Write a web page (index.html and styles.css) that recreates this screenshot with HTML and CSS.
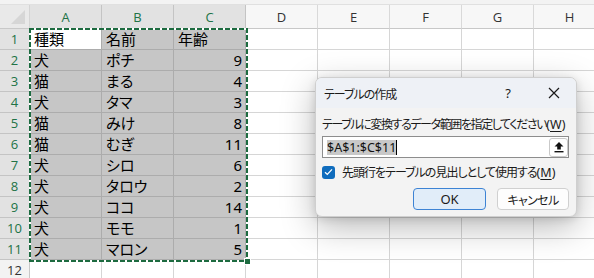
FILE: index.html
```html
<!DOCTYPE html>
<html lang="ja">
<head>
<meta charset="utf-8">
<title>テーブルの作成</title>
<link rel="stylesheet" href="styles.css">
</head>
<body>
<div class="app">
  <div class="topband"></div>
  <div class="sheet">
    <div class="corner"><span class="tri"></span></div>
    <div class="colhead sel">A</div>
    <div class="colhead sel">B</div>
    <div class="colhead sel">C</div>
    <div class="colhead">D</div>
    <div class="colhead">E</div>
    <div class="colhead">F</div>
    <div class="colhead">G</div>
    <div class="colhead">H</div>

    <div class="rowhead sel">1</div><div class="cell active">種類</div><div class="cell hl">名前</div><div class="cell hl">年齢</div><div class="cell"></div><div class="cell"></div><div class="cell"></div><div class="cell"></div><div class="cell"></div>
    <div class="rowhead sel">2</div><div class="cell hl">犬</div><div class="cell hl">ポチ</div><div class="cell hl num">9</div><div class="cell"></div><div class="cell"></div><div class="cell"></div><div class="cell"></div><div class="cell"></div>
    <div class="rowhead sel">3</div><div class="cell hl">猫</div><div class="cell hl">まる</div><div class="cell hl num">4</div><div class="cell"></div><div class="cell"></div><div class="cell"></div><div class="cell"></div><div class="cell"></div>
    <div class="rowhead sel">4</div><div class="cell hl">犬</div><div class="cell hl">タマ</div><div class="cell hl num">3</div><div class="cell"></div><div class="cell"></div><div class="cell"></div><div class="cell"></div><div class="cell"></div>
    <div class="rowhead sel">5</div><div class="cell hl">猫</div><div class="cell hl">みけ</div><div class="cell hl num">8</div><div class="cell"></div><div class="cell"></div><div class="cell"></div><div class="cell"></div><div class="cell"></div>
    <div class="rowhead sel">6</div><div class="cell hl">猫</div><div class="cell hl">むぎ</div><div class="cell hl num">11</div><div class="cell"></div><div class="cell"></div><div class="cell"></div><div class="cell"></div><div class="cell"></div>
    <div class="rowhead sel">7</div><div class="cell hl">犬</div><div class="cell hl">シロ</div><div class="cell hl num">6</div><div class="cell"></div><div class="cell"></div><div class="cell"></div><div class="cell"></div><div class="cell"></div>
    <div class="rowhead sel">8</div><div class="cell hl">犬</div><div class="cell hl">タロウ</div><div class="cell hl num">2</div><div class="cell"></div><div class="cell"></div><div class="cell"></div><div class="cell"></div><div class="cell"></div>
    <div class="rowhead sel">9</div><div class="cell hl">犬</div><div class="cell hl">ココ</div><div class="cell hl num">14</div><div class="cell"></div><div class="cell"></div><div class="cell"></div><div class="cell"></div><div class="cell"></div>
    <div class="rowhead sel">10</div><div class="cell hl">犬</div><div class="cell hl">モモ</div><div class="cell hl num">1</div><div class="cell"></div><div class="cell"></div><div class="cell"></div><div class="cell"></div><div class="cell"></div>
    <div class="rowhead sel">11</div><div class="cell hl">犬</div><div class="cell hl">マロン</div><div class="cell hl num">5</div><div class="cell"></div><div class="cell"></div><div class="cell"></div><div class="cell"></div><div class="cell"></div>
    <div class="rowhead">12</div><div class="cell"></div><div class="cell"></div><div class="cell"></div><div class="cell"></div><div class="cell"></div><div class="cell"></div><div class="cell"></div><div class="cell"></div>

    <div class="ants"><span class="handle"></span></div>
  </div>

  <div class="dialog">
    <div class="titlebar">
      <span class="title">テーブルの作成</span>
      <span class="help">?</span>
      <svg class="close" width="12" height="12" viewBox="0 0 12 12"><path d="M1 1L11 11M11 1L1 11" stroke="#1a1a1a" stroke-width="1.2" fill="none"/></svg>
    </div>
    <div class="dbody">
      <div class="label">テーブルに変換するデータ範囲を指定してください<span class="acc">(<u>W</u>)</span></div>
      <div class="rangebox">
        <span class="range">$A$1:$C$11</span><span class="caret"></span>
        <span class="pick">
          <svg width="12" height="12" viewBox="0 0 12 12"><path d="M6 1L1.5 5.5H4.2V8.5H7.8V5.5H10.5Z" fill="#111"/><rect x="1.5" y="10" width="9" height="1.4" fill="#111"/></svg>
        </span>
      </div>
      <div class="check">
        <span class="box"><svg width="9" height="8" viewBox="0 0 9 8"><path d="M1 4.2L3.3 6.4L8 1.4" stroke="#fff" stroke-width="1.3" fill="none"/></svg></span>
        <span class="cklabel">先頭行をテーブルの見出しとして使用する<span class="acc">(<u>M</u>)</span></span>
      </div>
      <div class="buttons">
        <span class="btn ok">OK</span>
        <span class="btn">キャンセル</span>
      </div>
    </div>
  </div>
</div>
</body>
</html>
```

FILE: styles.css
```css
body {margin: 0; background: #fff; font-family: "Noto Sans CJK JP", "Noto Sans", sans-serif;}
.app {position: relative; width: 594px; height: 278px; overflow: hidden; background: #fff;}
.topband {height: 5px; background: #f3f3f3; border-bottom: 1px solid #e0e0e0; box-sizing: border-box;}

.sheet {position: relative; display: grid; grid-template-columns: 30px repeat(8, 72px); grid-template-rows: 24px repeat(12, 21px);}
.corner {background: #e9e9e9; border-right: 1px solid #d4d4d4; border-bottom: 1px solid #c8c8c8; position: relative;}
.corner .tri {position: absolute; right: 4px; bottom: 4px; width: 0; height: 0; border-left: 14px solid transparent; border-bottom: 14px solid #d6d6d6;}
.colhead {background: #f7f7f7; border-right: 1px solid #d9d9d9; border-bottom: 1px solid #c8c8c8; font: 13px "Open Sans", "Noto Sans", sans-serif; color: #333; display: flex; align-items: center; justify-content: center;}
.colhead.sel {background: #e2e2e2; color: #217346; border-right-color: #c4c4c4;}
.rowhead {background: #f3f3f3; border-right: 1px solid #c8c8c8; border-bottom: 1px solid #d9d9d9; font: 13px "Open Sans", "Noto Sans", sans-serif; color: #333; display: flex; align-items: center; justify-content: center;}
.rowhead.sel {background: #e2e2e2; color: #217346; border-bottom-color: #c4c4c4;}
.cell {border-right: 1px solid #d6d6d6; border-bottom: 1px solid #d6d6d6; font-size: 15px; line-height: 20px; color: #000; padding-left: 4px; white-space: nowrap; font-feature-settings: "palt";}
.cell.hl {background: #c6c6c6; border-color: #acacac;}
.cell.active {background: #fff; border-color: #acacac;}
.cell.num {text-align: right; padding-left: 0; padding-right: 3px; font-family: "Noto Sans", sans-serif;}

.ants {position: absolute; left: 29px; top: 23px; width: 219px; height: 234px; box-sizing: border-box;
  background:
    repeating-linear-gradient(90deg, #1d6b40 0 5px, #fff 5px 7px) top left / 100% 2px no-repeat,
    repeating-linear-gradient(90deg, #1d6b40 0 5px, #fff 5px 7px) bottom left / 100% 2px no-repeat,
    repeating-linear-gradient(180deg, #1d6b40 0 5px, #fff 5px 7px) top left / 2px 100% no-repeat,
    repeating-linear-gradient(180deg, #1d6b40 0 5px, #fff 5px 7px) top right / 2px 100% no-repeat;}
.handle {position: absolute; right: -3px; bottom: -3px; width: 5px; height: 5px; background: #1d6b40; border: 1px solid #fff;}

.dialog {position: absolute; left: 315px; top: 77px; width: 262px; height: 140px; box-sizing: border-box; background: #f3f3f3; border: 1px solid #cfcfcf; border-radius: 7px; box-shadow: 0 10px 34px rgba(0,0,0,0.28), 0 2px 8px rgba(0,0,0,0.12); overflow: hidden; font-size: 12px; color: #1a1a1a; font-feature-settings: "palt";}
.titlebar {height: 30px; background: #eef1f6; display: flex; align-items: center; padding-left: 8px;}
.title {flex: 1; letter-spacing: -1px;}
.help {width: 12px; text-align: center; margin-right: 34px; font-family: "Noto Sans", sans-serif; font-size: 13px;}
.close {margin-right: 16px;}
.dbody {padding: 7px 6px 0 6px;}
.label {height: 17px; line-height: 17px; white-space: nowrap; letter-spacing: -1.4px;}
.acc {letter-spacing: 0; font-family: "Noto Sans", sans-serif; font-size: 12.5px;}
.acc u {text-decoration-thickness: 1px; text-underline-offset: 2px;}
.rangebox {margin-top: 4px; height: 22px; box-sizing: border-box; background: #fff; border: 1px solid #8d8d8d; display: flex; align-items: center; padding-left: 4px; margin-right: 1px;}
.range {background: #c8c8c8; font: 12.5px "Noto Sans", sans-serif; line-height: 15px; color: #111;}
.caret {width: 1px; height: 15px; background: #000;}
.pick {margin-left: auto; width: 19px; height: 19px; box-sizing: border-box; background: #fff; border: 1px solid #c9c9c9; border-radius: 3px; display: flex; align-items: center; justify-content: center;}
.check {margin-top: 7px; display: flex; align-items: center; gap: 7px; height: 14px; white-space: nowrap;}
.cklabel {letter-spacing: -1px;}
.box {width: 13px; height: 13px; background: #0f6cbd; border-radius: 3px; display: flex; align-items: center; justify-content: center;}
.buttons {display: flex; justify-content: flex-end; gap: 11px; margin-top: 9px; margin-right: 1px;}
.btn {width: 72px; height: 22px; box-sizing: border-box; border: 1px solid #d0d0d0; border-radius: 4px; background: #fdfdfd; display: flex; align-items: center; justify-content: center; font-size: 12px; letter-spacing: -0.6px;}
.btn.ok {width: 73px; background: #e1edf9; border-color: #3d83d4; font-family: "Noto Sans", sans-serif; font-size: 13px; letter-spacing: 0;}
```
